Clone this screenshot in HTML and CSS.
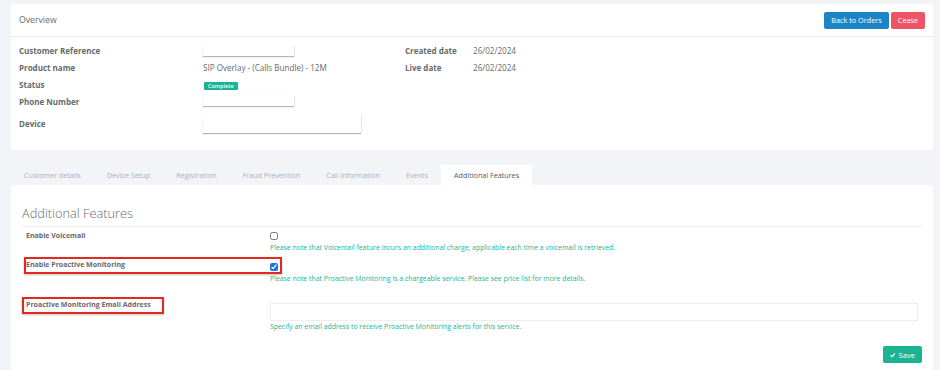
FILE: index.html
```html
<!DOCTYPE html>
<html lang="en">
<head>
    <meta charset="UTF-8">
    <title>Order - Additional Features</title>
    <link rel="stylesheet" href="styles.css">
</head>
<body>
<div class="page">

    <!-- Overview -->
    <section class="panel overview">
        <header class="panel-head">
            <h5>Overview</h5>
            <div class="actions">
                <button class="btn btn-primary">Back to Orders</button>
                <button class="btn btn-danger">Cease</button>
            </div>
        </header>
        <div class="info">
            <dl class="info-col info-main">
                <div class="info-row"><dt>Customer Reference</dt><dd><span class="redacted redacted-sm"></span></dd></div>
                <div class="info-row"><dt>Product name</dt><dd>SIP Overlay - (Calls Bundle) - 12M</dd></div>
                <div class="info-row"><dt>Status</dt><dd><span class="label-status">Complete</span></dd></div>
                <div class="info-row"><dt>Phone Number</dt><dd><span class="redacted redacted-sm"></span></dd></div>
                <div class="info-row info-row-device"><dt>Device</dt><dd><span class="redacted redacted-lg"></span></dd></div>
            </dl>
            <dl class="info-col info-dates">
                <div class="info-row"><dt>Created date</dt><dd>26/02/2024</dd></div>
                <div class="info-row"><dt>Live date</dt><dd>26/02/2024</dd></div>
            </dl>
        </div>
    </section>

    <!-- Tabs -->
    <nav class="tabs">
        <a class="tab">Customer details</a>
        <a class="tab">Device Setup</a>
        <a class="tab">Registration</a>
        <a class="tab">Fraud Prevention</a>
        <a class="tab">Call Information</a>
        <a class="tab">Events</a>
        <a class="tab active">Additional Features</a>
    </nav>

    <section class="panel tab-pane">
        <h3 class="section-title">Additional Features</h3>

        <div class="form-group group-voicemail">
            <label class="form-label">Enable Voicemail</label>
            <div class="form-control-col">
                <input type="checkbox" class="check">
                <span class="help">Please note that Voicemail feature incurs an additional charge, applicable each time a voicemail is retrieved.</span>
            </div>
        </div>

        <div class="form-group group-monitoring">
            <span class="mark mark-monitoring"></span>
            <label class="form-label">Enable Proactive Monitoring</label>
            <div class="form-control-col">
                <input type="checkbox" class="check check-lower" checked>
                <span class="help">Please note that Proactive Monitoring is a chargeable service. Please see price list for more details.</span>
            </div>
        </div>

        <div class="form-group group-email">
            <span class="mark mark-email"></span>
            <label class="form-label">Proactive Monitoring Email Address</label>
            <div class="form-control-col">
                <input type="text" class="text-input">
                <span class="help help-tight">Specify an email address to receive Proactive Monitoring alerts for this service.</span>
            </div>
        </div>

        <div class="form-footer">
            <button class="btn btn-success">
                <svg class="icon-check" viewBox="0 0 10 10" width="6" height="6"><path d="M1 5.2 L3.8 8 L9 2.2" fill="none" stroke="#fff" stroke-width="2"/></svg>
                Save
            </button>
        </div>
    </section>

</div>
</body>
</html>
```

FILE: styles.css
```css
:root {
    --bg-page: #f3f4f7;
    --bg-panel: #ffffff;
    --border-light: #e7eaec;
    --text-main: #676a6c;
    --text-muted: #a7b1c2;
    --green: #1ab394;
    --blue: #1c84c6;
    --red: #ed5565;
    --mark-red: #e3281e;
}

* {
    margin: 0;
    padding: 0;
    box-sizing: border-box;
}

body {
    font-family: 'Open Sans', 'Noto Sans', sans-serif;
    color: var(--text-main);
    background-color: var(--bg-page);
    overflow: hidden;
}

.page {
    padding: 4px 7px 0 11px;
}

.panel {
    background-color: var(--bg-panel);
}

/* Overview */
.overview {
    height: 146px;
}

.panel-head {
    height: 33px;
    padding: 0 8px;
    display: flex;
    align-items: center;
    justify-content: space-between;
    border-bottom: 1px solid var(--border-light);
}

.panel-head h5 {
    font-size: 8.7px;
    font-weight: 400;
    margin-top: -1px;
}

.actions {
    display: flex;
    gap: 2px;
}

.btn {
    height: 17px;
    border: none;
    border-radius: 2px;
    color: #ffffff;
    font-family: inherit;
    font-size: 7.3px;
    padding: 0 7px;
    display: inline-flex;
    align-items: center;
    gap: 3px;
}

.btn-primary {
    background-color: var(--blue);
    width: 65px;
    justify-content: center;
}

.btn-danger {
    background-color: var(--red);
    width: 34px;
    justify-content: center;
}

.btn-success {
    background-color: var(--green);
    width: 39px;
    justify-content: center;
    font-size: 7.6px;
}

.info {
    display: flex;
    padding: 5px 8px 0 8px;
}

.info-col dt {
    font-weight: 700;
    font-size: 8px;
}

.info-col dd {
    font-size: 8.1px;
}

.info-main {
    width: 386px;
}

.info-main dt {
    width: 184px;
}

.info-dates dt {
    width: 68px;
}

.info-row {
    display: flex;
    align-items: center;
    height: 17px;
}

.info-row:nth-child(4) {
    height: 16px;
}

.info-row-device {
    margin-top: 5px;
    height: 19px;
}

.redacted {
    display: block;
    background: #ffffff;
    box-shadow: 0 1px 1px rgba(0, 0, 0, 0.28), 1px 0 1px rgba(0, 0, 0, 0.05);
}

.redacted-sm {
    width: 91px;
    height: 10px;
}

.redacted-lg {
    width: 158px;
    height: 18px;
}

.label-status {
    display: inline-block;
    background-color: var(--green);
    color: #ffffff;
    font-size: 5.5px;
    font-weight: 600;
    line-height: 8px;
    padding: 0 4px;
    border-radius: 1px;
    margin-left: 1px;
}

/* Tabs */
.tabs {
    display: flex;
    height: 20px;
    margin-top: 15px;
}

.tab {
    display: flex;
    align-items: center;
    padding: 0 13px;
    font-size: 7.2px;
    color: var(--text-muted);
}

.tab.active {
    background-color: var(--bg-panel);
    color: #555a5c;
}

/* Additional features pane */
.tab-pane {
    height: 200px;
    padding: 18px 11px 0 11px;
}

.section-title {
    font-size: 12.8px;
    font-weight: 300;
    line-height: 20px;
    padding-bottom: 3px;
    border-bottom: 1px solid #eeeeee;
    margin-bottom: 4px;
}

.form-group {
    display: flex;
    position: relative;
}

.group-voicemail {
    margin-bottom: 7px;
}

.group-monitoring {
    margin-bottom: 16px;
}

.group-email {
    margin-bottom: 14px;
}

.form-label {
    width: 248px;
    padding-left: 4px;
    font-size: 7px;
    font-weight: 700;
    line-height: 10px;
}

.form-control-col {
    flex: 1;
    display: flex;
    flex-direction: column;
    align-items: flex-start;
    padding-right: 4px;
}

.check {
    width: 8px;
    height: 8px;
    margin-top: 1px;
    accent-color: #1a73e8;
}

.check-lower {
    margin-top: 3px;
}

.help {
    color: var(--green);
    font-size: 6.9px;
    line-height: 11px;
    margin-top: 2px;
}

.help-tight {
    margin-top: 0;
}

.text-input {
    width: 100%;
    height: 18px;
    margin-top: 3px;
    border: 1px solid #eceeef;
}

/* red annotation frames over the form */
.mark {
    position: absolute;
    top: -3px;
    height: 17px;
    border: 2px solid var(--mark-red);
    box-shadow: 0 1px 2px rgba(0, 0, 0, 0.25);
    pointer-events: none;
}

.mark-monitoring {
    left: 2px;
    width: 258px;
}

.mark-email {
    left: 0;
    width: 142px;
}

.form-footer {
    display: flex;
    justify-content: flex-end;
}

.icon-check {
    display: block;
}
```
